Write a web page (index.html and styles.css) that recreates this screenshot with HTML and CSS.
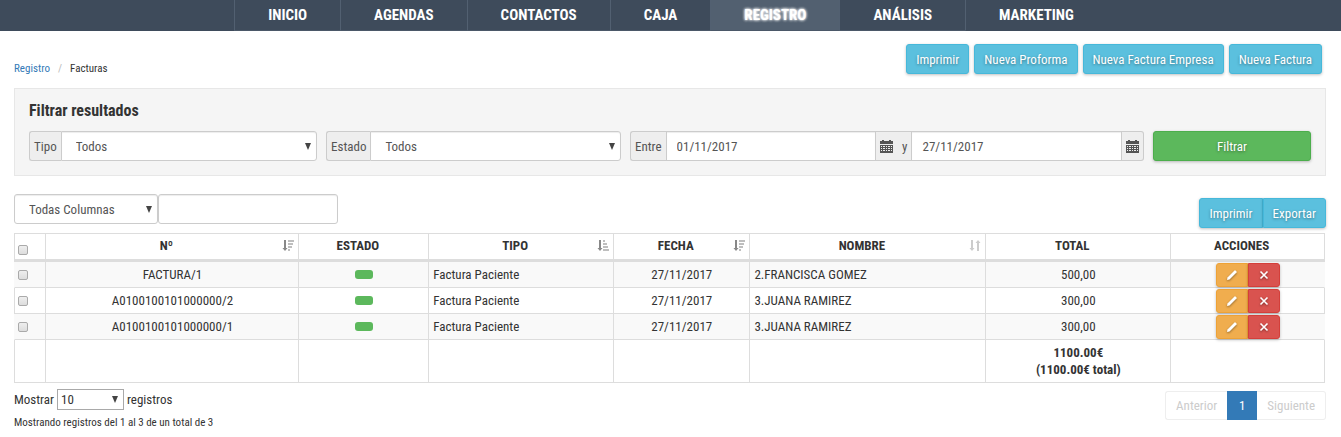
FILE: index.html
```html
<!DOCTYPE html>
<html lang="es">
<head>
<meta charset="UTF-8" />
<meta name="viewport" content="width=device-width, initial-scale=1" />
<title>Registro - Facturas</title>
<link rel="stylesheet" href="styles.css">
</head>
<body>

<!-- Icons -->
<svg class="sprite" aria-hidden="true">
  <symbol id="icon-calendar" viewBox="0 0 13 13">
    <path d="M0 1h2V0h2v1h5V0h2v1h2v3H0z" />
    <path d="M0 5h13v8H0zM1 6v1h1V6zM3 6v1h2V6zM6 6v1h1V6zM8 6v1h2V6zM11 6v1h1V6zM1 8v1h1V8zM3 8v1h2V8zM6 8v1h1V8zM8 8v1h2V8zM11 8v1h1V8zM1 10v1h1v-1zM3 10v1h2v-1zM6 10v1h1v-1zM8 10v1h2v-1zM11 10v1h1v-1z" fill-rule="evenodd" />
  </symbol>
  <symbol id="icon-sort-desc" viewBox="0 0 12 12">
    <path d="M2 0h2v8h1.500L3 11 .5 8H2z" />
    <path d="M6 0h6v2H6zM6 3h5v2H6zM6 6h4v2H6zM6 9h2v2H6z" opacity=".55" />
  </symbol>
  <symbol id="icon-sort-asc" viewBox="0 0 12 12">
    <path d="M2 0h2v8h1.500L3 11 .5 8H2z" />
    <path d="M6 0h2v2H6zM6 3h4v2H6zM6 6h5v2H6zM6 9h6v2H6z" opacity=".55" />
  </symbol>
  <symbol id="icon-sort" viewBox="0 0 12 12">
    <path d="M2 0h2v8h1.500L3 11 .5 8H2zM8 11h2V3h1.500L9 0 6.500 3H8z" />
  </symbol>
  <symbol id="icon-pencil" viewBox="0 0 12 12">
    <path d="M1 11l.5-2.500L8.500 1.500q.5-.5 1 0l1 1q.5.500 0 1L3.500 10.500z" />
  </symbol>
  <symbol id="icon-remove" viewBox="0 0 12 12">
    <path d="M2.500 2.500l7 7M9.500 2.500l-7 7" fill="none" stroke="#fff" stroke-width="1.600" />
  </symbol>
</svg>

<nav class="navbar">
  <a href="#">INICIO</a>
  <a href="#">AGENDAS</a>
  <a href="#">CONTACTOS</a>
  <a href="#">CAJA</a>
  <a href="#" class="active">REGISTRO</a>
  <a href="#">ANÁLISIS</a>
  <a href="#">MARKETING</a>
</nav>

<main class="container">
  <div class="page-head">
    <div class="breadcrumb">
      <a href="#">Registro</a><span class="sep">/</span><span>Facturas</span>
    </div>
    <div class="page-actions">
      <button type="button" class="btn btn-info">Imprimir</button>
      <button type="button" class="btn btn-info">Nueva Proforma</button>
      <button type="button" class="btn btn-info">Nueva Factura Empresa</button>
      <button type="button" class="btn btn-info">Nueva Factura</button>
    </div>
  </div>

  <!-- Filters -->
  <form class="filter">
    <h2>Filtrar resultados</h2>
    <div class="filter-row">
      <div class="group group-tipo">
        <label class="addon" for="tipo">Tipo</label>
        <select id="tipo" class="control"><option>Todos</option></select>
      </div>
      <div class="group group-estado">
        <label class="addon" for="estado">Estado</label>
        <select id="estado" class="control"><option>Todos</option></select>
      </div>
      <div class="group group-fechas">
        <label class="addon" for="desde">Entre</label>
        <input type="text" id="desde" class="control" value="01/11/2017">
        <label class="addon addon-mid" for="hasta"><svg class="icon-cal"><use href="#icon-calendar" /></svg>y</label>
        <input type="text" id="hasta" class="control" value="27/11/2017">
        <span class="addon"><svg class="icon-cal"><use href="#icon-calendar" /></svg></span>
      </div>
      <button type="button" class="btn btn-success">Filtrar</button>
    </div>
  </form>

  <!-- Search and export -->
  <div class="toolbar">
    <div class="search">
      <select class="control search-col" aria-label="Columna"><option>Todas Columnas</option></select>
      <input type="text" class="control search-text" aria-label="Buscar">
    </div>
    <div class="btn-group">
      <button type="button" class="btn btn-info">Imprimir</button>
      <button type="button" class="btn btn-info">Exportar</button>
    </div>
  </div>

  <table class="table">
    <colgroup>
      <col class="col-check"><col class="col-num"><col class="col-estado"><col class="col-tipo">
      <col class="col-fecha"><col class="col-nombre"><col class="col-total"><col class="col-acciones">
    </colgroup>
    <thead>
      <tr>
        <th class="check"><input type="checkbox" aria-label="Seleccionar todo"></th>
        <th class="sortable">Nº<svg class="icon-sort"><use href="#icon-sort-desc" /></svg></th>
        <th>ESTADO</th>
        <th class="sortable">TIPO<svg class="icon-sort"><use href="#icon-sort-asc" /></svg></th>
        <th class="sortable">FECHA<svg class="icon-sort"><use href="#icon-sort-desc" /></svg></th>
        <th class="sortable">NOMBRE<svg class="icon-sort unsorted"><use href="#icon-sort" /></svg></th>
        <th>TOTAL</th>
        <th>ACCIONES</th>
      </tr>
    </thead>
    <tbody>
      <tr>
        <td class="check"><input type="checkbox" aria-label="Seleccionar FACTURA/1"></td>
        <td>FACTURA/1</td>
        <td><span class="status"></span></td>
        <td class="left">Factura Paciente</td>
        <td>27/11/2017</td>
        <td class="left">2.FRANCISCA GOMEZ</td>
        <td>500,00</td>
        <td><div class="row-actions">
          <button type="button" class="btn btn-xs btn-warning" aria-label="Editar"><svg><use href="#icon-pencil" /></svg></button>
          <button type="button" class="btn btn-xs btn-danger" aria-label="Eliminar"><svg><use href="#icon-remove" /></svg></button>
        </div></td>
      </tr>
      <tr>
        <td class="check"><input type="checkbox" aria-label="Seleccionar A0100100101000000/2"></td>
        <td>A0100100101000000/2</td>
        <td><span class="status"></span></td>
        <td class="left">Factura Paciente</td>
        <td>27/11/2017</td>
        <td class="left">3.JUANA RAMIREZ</td>
        <td>300,00</td>
        <td><div class="row-actions">
          <button type="button" class="btn btn-xs btn-warning" aria-label="Editar"><svg><use href="#icon-pencil" /></svg></button>
          <button type="button" class="btn btn-xs btn-danger" aria-label="Eliminar"><svg><use href="#icon-remove" /></svg></button>
        </div></td>
      </tr>
      <tr>
        <td class="check"><input type="checkbox" aria-label="Seleccionar A0100100101000000/1"></td>
        <td>A0100100101000000/1</td>
        <td><span class="status"></span></td>
        <td class="left">Factura Paciente</td>
        <td>27/11/2017</td>
        <td class="left">3.JUANA RAMIREZ</td>
        <td>300,00</td>
        <td><div class="row-actions">
          <button type="button" class="btn btn-xs btn-warning" aria-label="Editar"><svg><use href="#icon-pencil" /></svg></button>
          <button type="button" class="btn btn-xs btn-danger" aria-label="Eliminar"><svg><use href="#icon-remove" /></svg></button>
        </div></td>
      </tr>
    </tbody>
    <tfoot>
      <tr>
        <td></td><td></td><td></td><td></td><td></td><td></td>
        <td>1100.00€<br>(1100.00€ total)</td>
        <td></td>
      </tr>
    </tfoot>
  </table>

  <div class="table-foot">
    <div>
      <label class="page-size">Mostrar
        <select><option>10</option></select>
        registros
      </label>
      <p class="info">Mostrando registros del 1 al 3 de un total de 3</p>
    </div>
    <div class="pagination">
      <a class="disabled">Anterior</a>
      <a href="#" class="current">1</a>
      <a class="disabled">Siguiente</a>
    </div>
  </div>
</main>

</body>
</html>
```

FILE: styles.css
```css
* {
  box-sizing: border-box;
}
body {
  margin: 0;
  font-family: 'Roboto Condensed', 'Liberation Sans Narrow', Roboto, sans-serif;
  font-size: 13px;
  line-height: 17px;
  color: #333;
  background: #fff;
}
a {
  text-decoration: none;
}
button, input, select {
  font: inherit;
  margin: 0;
}
.sprite {
  display: none;
}

/* --- Navbar --- */
.navbar {
  display: flex;
  justify-content: center;
  height: 31px;
  background: #3e4b5b;
}
.navbar a {
  padding: 0 33px;
  border-left: 1px solid #526071;
  border-bottom: 1px solid #4b5868;
  color: #fff;
  font-size: 15px;
  font-weight: bold;
  line-height: 30px;
}
.navbar a:last-child {
  border-bottom-color: transparent;
}
.navbar a.active {
  background: #526070;
  text-shadow: 0 0 3px #fff, 0 0 3px #fff;
}

.container {
  padding: 13px 15px 8px 14px;
}

/* --- Breadcrumb and page buttons --- */
.page-head {
  display: flex;
  justify-content: space-between;
  align-items: flex-start;
  padding-right: 4px;
  margin-bottom: 11px;
}
.breadcrumb {
  padding-top: 16px;
  font-size: 11px;
}
.breadcrumb a {
  color: #337ab7;
}
.breadcrumb .sep {
  padding: 0 8px;
  color: #bbb;
}
.page-actions {
  display: flex;
  gap: 5px;
}

/* --- Buttons --- */
.btn {
  height: 30px;
  padding: 0 9px;
  border: 1px solid;
  border-radius: 3px;
  color: #fff;
  text-shadow: 0 1px 3px rgba(0,0,0,0.4);
  box-shadow: 0 1px 3px rgba(0,0,0,0.25);
  cursor: pointer;
}
.btn-info {
  background: #5bc0de;
  border-color: #46b8da;
}
.btn-success {
  background: #5cb85c;
  border-color: #4cae4c;
}
.btn-warning {
  background: #f0ad4e;
  border-color: #eea236;
}
.btn-danger {
  background: #d9534f;
  border-color: #d43f3a;
}
.btn-group {
  display: flex;
}
.btn-group .btn:first-child, .btn-warning {
  border-radius: 3px 0 0 3px;
}
.btn-group .btn:last-child, .btn-danger {
  border-radius: 0 3px 3px 0;
}

/* --- Form controls --- */
.control {
  min-width: 0;
  height: 30px;
  padding: 0 10px;
  border: 1px solid #ccc;
  border-radius: 3px;
  background-color: #fff;
  color: #555;
  box-shadow: inset 0 1px 1px rgba(0,0,0,0.075);
}
select {
  appearance: none;
  background-image: url("data:image/svg+xml,%3Csvg xmlns='http://www.w3.org/2000/svg' width='6' height='7'%3E%3Cpath d='M0 0h6L3 7z' fill='%23444'/%3E%3C/svg%3E");
  background-repeat: no-repeat;
  background-position: right 5px center;
}
select.control {
  padding: 0 14px;
}

/* --- Filter panel --- */
.filter {
  padding: 13px 14px 14px;
  border: 1px solid #e7e7e7;
  background: #f5f5f5;
}
.filter h2 {
  margin: 0 0 12px;
  font-size: 16px;
  line-height: 17px;
}
.filter-row {
  display: flex;
  gap: 9px;
}
.filter-row .btn {
  flex: 156 1 0;
  padding: 0;
}
.group {
  display: flex;
  min-width: 0;
}
.group-tipo { flex: 288 1 0; }
.group-estado { flex: 295 1 0; }
.group-fechas { flex: 514 1 0; }
.group .control {
  flex: 1;
  border-radius: 0;
}
.group .control:last-child {
  border-radius: 0 3px 3px 0;
}
.addon {
  display: flex;
  align-items: center;
  padding: 0 4px;
  border: 1px solid #ccc;
  border-right: 0;
  background: #eee;
  color: #555;
}
.addon:first-child {
  border-radius: 3px 0 0 3px;
}
.addon:last-child {
  border-right: 1px solid #ccc;
  border-left: 0;
  border-radius: 0 3px 3px 0;
}
.addon-mid {
  gap: 9px;
  border-left: 0;
}
.icon-cal {
  width: 13px;
  height: 13px;
  fill: #555;
}

/* --- Toolbar --- */
.toolbar {
  display: flex;
  justify-content: space-between;
  align-items: flex-end;
  margin: 18px 0 5px;
}
.search {
  display: flex;
  margin-bottom: 4px;
}
.search-col {
  width: 144px;
}
.search-text {
  width: 180px;
}

/* --- Table --- */
.table {
  width: calc(100% - 1px);
  border-spacing: 0;
  border-top: 1px solid #ddd;
  table-layout: fixed;
}
.col-check { width: 2.4%; }
.col-num { width: 19.3%; }
.col-estado { width: 9.9%; }
.col-tipo { width: 14.1%; }
.col-fecha { width: 10.4%; }
.col-nombre { width: 18%; }
.col-total { width: 14.1%; }
.col-acciones { width: 11.8%; }
.table th, .table td {
  height: 26px;
  padding: 0 4px;
  border-left: 1px solid #ddd;
  border-bottom: 1px solid #ddd;
  text-align: center;
}
.table th:last-child, .table td:last-child {
  border-right: 1px solid #ddd;
}
.table th {
  height: 28px;
  padding: 0 16px 2px 4px;
  border-bottom-width: 3px;
}
.table tbody tr:nth-child(odd) {
  background: #f9f9f9;
}
.table tbody tr:nth-child(odd) td:first-child {
  border-left-color: #f9f9f9;
}
.table tbody tr:nth-child(odd) td:last-child {
  border-right-color: #f9f9f9;
}
.table .left {
  text-align: left;
}
.table tfoot td {
  padding: 4px;
  font-weight: bold;
}
.sortable {
  position: relative;
}
.icon-sort {
  position: absolute;
  top: 6px;
  right: 4px;
  width: 12px;
  height: 12px;
  fill: #888;
}
.icon-sort.unsorted {
  fill: #ccc;
}
.table .check {
  padding-left: 3px;
  padding-right: 3px;
}
.check input {
  appearance: none;
  display: block;
  width: 10px;
  height: 10px;
  border: 1px solid #aaa;
  border-radius: 2px;
  background: linear-gradient(#eee, #ddd);
}
.table th.check {
  vertical-align: bottom;
  padding-bottom: 4px;
}
.status {
  display: block;
  width: 18px;
  height: 9px;
  margin: 0 auto;
  border-radius: 3px;
  background: #5cb85c;
}
.row-actions {
  display: flex;
  justify-content: center;
}
.btn-xs {
  display: flex;
  align-items: center;
  justify-content: center;
  width: 32px;
  height: 24px;
  padding: 0;
}
.btn-xs svg {
  width: 12px;
  height: 12px;
  fill: #fff;
  filter: drop-shadow(0 1px 1px rgba(0,0,0,0.4));
}

/* --- Table footer --- */
.table-foot {
  display: flex;
  justify-content: space-between;
  align-items: flex-start;
  padding-top: 6px;
}
.page-size {
  display: flex;
  align-items: center;
  gap: 3px;
}
.page-size select {
  width: 67px;
  height: 21px;
  padding: 0 3px;
  border: 1px solid #a9a9a9;
  border-radius: 0;
  background-color: #fff;
  color: #333;
}
.info {
  margin: 4px 0 0;
  font-size: 11px;
}
.pagination {
  display: flex;
  margin-top: 2px;
}
.pagination a {
  min-width: 30px;
  padding: 5px 10px;
  border: 1px solid #eee;
  color: #ccc;
  text-align: center;
}
.pagination a:first-child {
  border-right: 0;
  border-radius: 3px 0 0 3px;
}
.pagination a:last-child {
  border-left: 0;
  border-radius: 0 3px 3px 0;
}
.pagination .current {
  background: #337ab7;
  border-color: #337ab7;
  color: #fff;
}
```
